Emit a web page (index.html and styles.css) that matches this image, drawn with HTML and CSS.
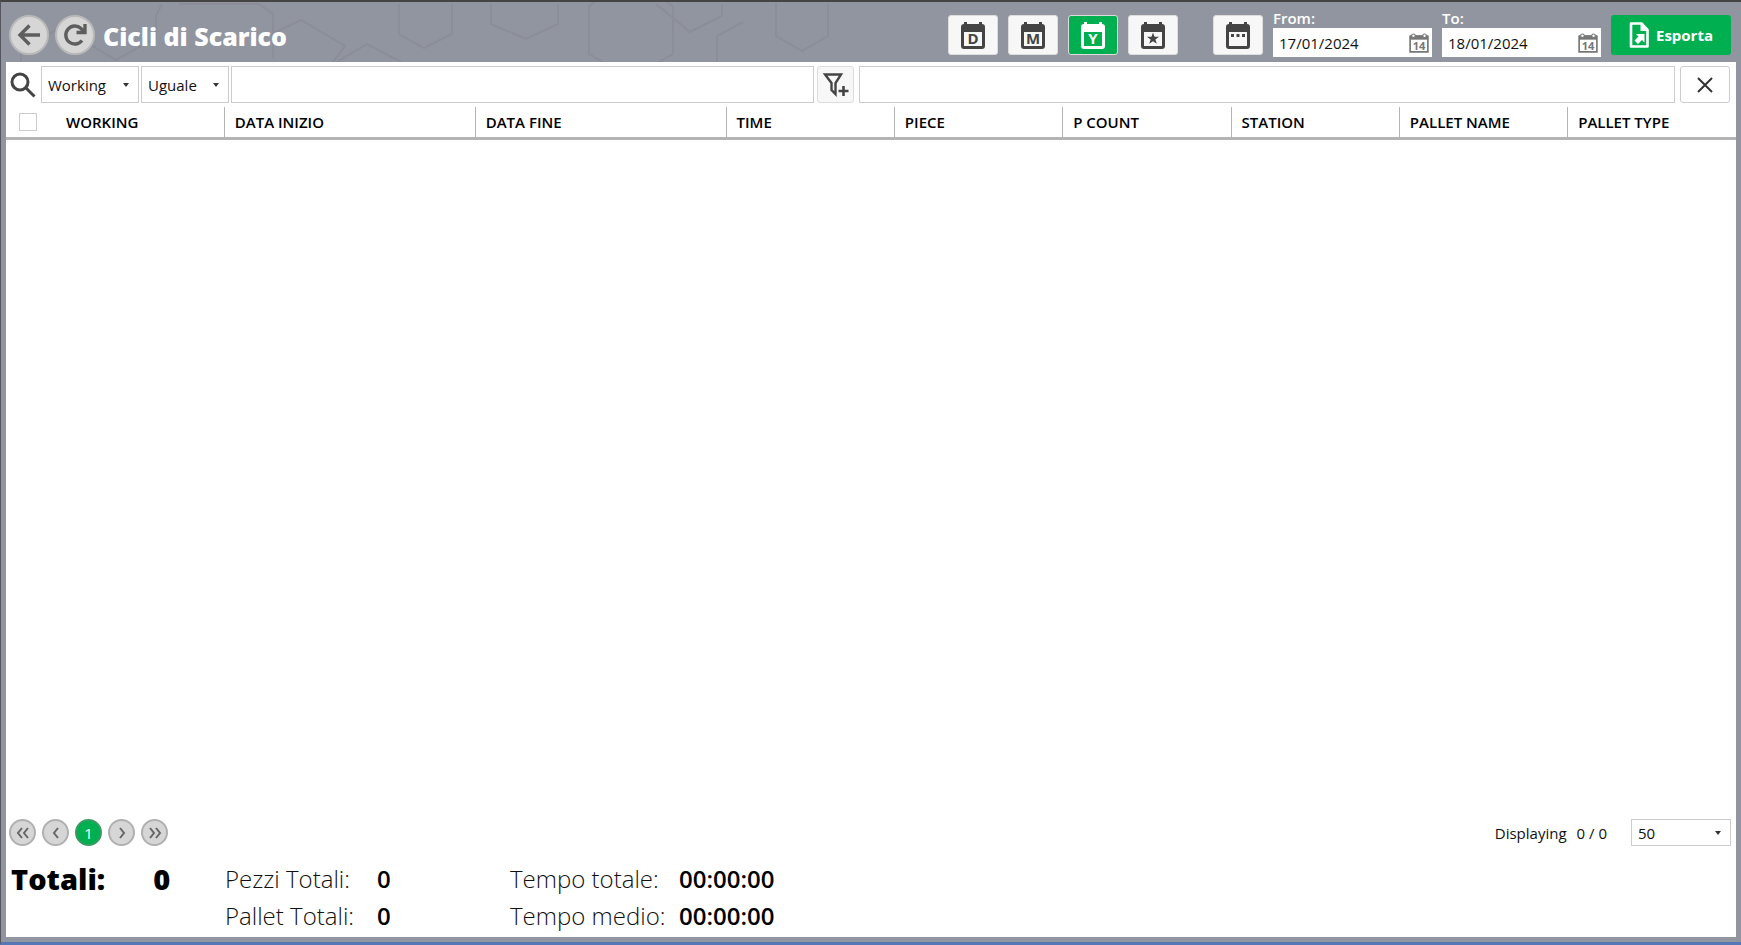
FILE: index.html
```html
<!DOCTYPE html>
<html lang="it">
<head>
  <meta charset="UTF-8">
  <title>Cicli di Scarico</title>
  <link rel="stylesheet" href="styles.css">
</head>
<body>
  <svg class="icon-defs" aria-hidden="true">
    <symbol id="calendar" viewBox="0 0 24 27">
      <path d="M3 0h3v2h12V0h3v2a3 3 0 0 1 3 3v19a3 3 0 0 1-3 3H3a3 3 0 0 1-3-3V5a3 3 0 0 1 3-3zM3 10v14h18V10z" fill="currentColor" fill-rule="evenodd"/>
    </symbol>
    <symbol id="calendar14" viewBox="0 0 18 18">
      <path d="M1 3h16v14H1z" fill="#fff" stroke="#777" stroke-width="1.5"/>
      <path d="M1 2h16v4H1z" fill="#777"/>
      <circle cx="4" cy="2.500" r="1.600" fill="#fff" stroke="#777"/>
      <circle cx="14" cy="2.500" r="1.600" fill="#fff" stroke="#777"/>
      <text x="9" y="15" text-anchor="middle" font-size="10" font-weight="700" fill="#777">14</text>
    </symbol>
  </svg>

  <header class="topbar">
    <svg class="hexagons" width="860" height="60" fill="none" stroke="#868994" stroke-width="2" aria-hidden="true">
      <path d="M20 60V48L55 28M85 40l30 18 40-22V14l6-12M178 2l80 0 14 10v44M398 2v30l25 14 28-14V2M262 36l38-18 44 26-12 16M336 60l30-18 34 18M490 2v20l35 15 32-15V2M588 4v48l14 8M588 4l6-4M672 4v48l-14 8M672 4l-6-4M655 2l34 28 32-16V2M716 60V34l26-14M775 2v32l26 15 26-15V2"/>
    </svg>

    <button class="round" type="button" aria-label="Indietro">
      <svg width="24" height="24" viewBox="0 0 24 24" fill="none" stroke="#5e5e5e" stroke-width="3.4"><path d="M23 12H4M12.500 2.500L3 12l9.500 9.500"/></svg>
    </button>
    <button class="round" type="button" aria-label="Aggiorna">
      <svg width="24" height="24" viewBox="0 0 24 24" fill="none" stroke="#5e5e5e" stroke-width="3.400"><path d="M19 17.500A9 9 0 1 1 18 5.500L21 9M22 1v8.500h-8.500"/></svg>
    </button>
    <h1>Cicli di Scarico</h1>

    <div class="periods">
      <button type="button" aria-label="Giorno">
        <svg width="24" height="27" viewBox="0 0 24 27"><use href="#calendar"/><text x="12" y="22">D</text></svg>
      </button>
      <button type="button" aria-label="Mese">
        <svg width="24" height="27" viewBox="0 0 24 27"><use href="#calendar"/><text x="12" y="22">M</text></svg>
      </button>
      <button class="active" type="button" aria-label="Anno">
        <svg width="24" height="27" viewBox="0 0 24 27"><use href="#calendar"/><text x="12" y="22">Y</text></svg>
      </button>
      <button type="button" aria-label="Preferiti">
        <svg width="24" height="27" viewBox="0 0 24 27"><use href="#calendar"/><path d="M12 10.500l1.500 4.300H18l-3.600 2.700 1.400 4.300-3.800-2.600-3.800 2.600 1.400-4.300L6 14.800h4.500z" fill="currentColor"/></svg>
      </button>
      <button class="custom" type="button" aria-label="Intervallo">
        <svg width="24" height="27" viewBox="0 0 24 27"><use href="#calendar"/><path d="M5 12h3v3H5zM10.500 12h3v3h-3zM16 12h3v3h-3z" fill="currentColor"/></svg>
      </button>
    </div>

    <div class="date">
      <label for="from">From:</label>
      <div class="date-box">
        <input id="from" type="text" value="17/01/2024">
        <button type="button" aria-label="Scegli data iniziale"><svg width="20" height="20"><use href="#calendar14"/></svg></button>
      </div>
    </div>
    <div class="date">
      <label for="to">To:</label>
      <div class="date-box">
        <input id="to" type="text" value="18/01/2024">
        <button type="button" aria-label="Scegli data finale"><svg width="20" height="20"><use href="#calendar14"/></svg></button>
      </div>
    </div>

    <button class="export" type="button">
      <svg width="20" height="26" viewBox="0 0 20 26"><path d="M2 1.500h10.500L18.500 8v16.500H2z" fill="none" stroke="#fff" stroke-width="2.600" stroke-linejoin="round"/><path d="M11.500 1v8h8z" fill="#fff"/><path d="M7 12h8.500v8.500L13 18l-4 4-3.500-3.500 4-4z" fill="#fff"/></svg>
      Esporta
    </button>
  </header>

  <main>
    <div class="filters">
      <svg class="search" width="26" height="26" viewBox="0 0 26 26" fill="none" stroke="#444" stroke-width="3"><circle cx="10" cy="10" r="8"/><path d="M15.500 15.500l9 9"/></svg>
      <span class="select field"><select aria-label="Campo"><option>Working</option></select></span>
      <span class="select operator"><select aria-label="Operatore"><option>Uguale</option></select></span>
      <input class="value" type="text" aria-label="Valore">
      <button class="add" type="button" aria-label="Aggiungi filtro">
        <svg width="26" height="24" viewBox="0 0 26 24" fill="none" stroke="#444" stroke-width="2.400"><path d="M2 1.500h16l-5.500 8.500v11l-4-4v-7z"/><path d="M20.500 13v10M15.500 18h10" stroke-width="2.600"/></svg>
      </button>
      <input class="active-filters" type="text" aria-label="Filtri attivi" readonly>
      <button class="clear" type="button" aria-label="Rimuovi filtri">
        <svg width="16" height="16" viewBox="0 0 16 16" fill="none" stroke="#333" stroke-width="2"><path d="M1 1l14 14M15 1L1 15"/></svg>
      </button>
    </div>

    <div class="grid">
      <table>
        <colgroup>
          <col class="c-check"><col>
          <col class="c-date"><col class="c-date">
          <col class="c-std"><col class="c-std"><col class="c-std"><col class="c-std"><col class="c-std"><col class="c-std">
        </colgroup>
        <thead>
          <tr>
            <th class="check"><input type="checkbox" aria-label="Seleziona tutto"></th>
            <th>WORKING</th>
            <th>DATA INIZIO</th>
            <th>DATA FINE</th>
            <th>TIME</th>
            <th>PIECE</th>
            <th>P COUNT</th>
            <th>STATION</th>
            <th>PALLET NAME</th>
            <th>PALLET TYPE</th>
          </tr>
        </thead>
        <tbody></tbody>
      </table>
    </div>

    <div class="pager">
      <button type="button" aria-label="Prima pagina"><svg width="14" height="14" viewBox="0 0 14 14"><path d="M6 2L2 7l4 5M12 2L8 7l4 5"/></svg></button>
      <button type="button" aria-label="Pagina precedente"><svg width="14" height="14" viewBox="0 0 14 14"><path d="M9 2L5 7l4 5"/></svg></button>
      <button class="current" type="button">1</button>
      <button type="button" aria-label="Pagina successiva"><svg width="14" height="14" viewBox="0 0 14 14"><path d="M5 2l4 5-4 5"/></svg></button>
      <button type="button" aria-label="Ultima pagina"><svg width="14" height="14" viewBox="0 0 14 14"><path d="M2 2l4 5-4 5M8 2l4 5-4 5"/></svg></button>
      <span class="displaying">Displaying</span>
      <span class="range">0 / 0</span>
      <span class="select size"><select aria-label="Righe per pagina"><option>50</option></select></span>
    </div>

    <div class="totals">
      <div class="total"><span>Totali:</span><span>0</span></div>
      <dl class="pieces">
        <dt>Pezzi Totali:</dt><dd>0</dd>
        <dt>Pallet Totali:</dt><dd>0</dd>
      </dl>
      <dl class="times">
        <dt>Tempo totale:</dt><dd>00:00:00</dd>
        <dt>Tempo medio:</dt><dd>00:00:00</dd>
      </dl>
    </div>
  </main>
</body>
</html>
```
FILE: styles.css
```css
* {
  box-sizing: border-box;
}
body {
  margin: 0;
  height: 100vh;
  display: flex;
  flex-direction: column;
  font-family: "Open Sans", "Noto Sans", sans-serif;
  font-size: 15px;
  color: #111;
  background: #9195a0;
  border-top: 2px solid #444;
  border-left: 1px solid #55555f;
  border-bottom: 3px solid #5577b5;
}
button, input, select {
  font: inherit;
  color: inherit;
}
button {
  display: flex;
  align-items: center;
  justify-content: center;
  padding: 0;
}
.icon-defs {
  display: none;
}

/* top bar */
.topbar {
  position: relative;
  display: flex;
  align-items: center;
  height: 60px;
  padding: 6px 10px 0 8px;
  flex-shrink: 0;
}
.topbar > * {
  position: relative;
}
.topbar .hexagons {
  position: absolute;
  left: 0;
  top: 0;
  opacity: 0.5;
}
.round {
  width: 40px;
  height: 40px;
  margin-right: 6px;
  border: 2px solid #b9b9b9;
  border-radius: 50%;
  background: #d6d6d6;
}
h1 {
  margin: 0 auto 0 2px;
  padding-top: 2px;
  font-size: 25px;
  font-weight: 800;
  line-height: 32px;
  color: #fff;
}
.periods {
  display: flex;
  gap: 10px;
  margin-right: 10px;
}
.periods button {
  width: 50px;
  height: 40px;
  border: 1px solid #ddd;
  border-radius: 3px;
  background: #f7f7f7;
  color: #444;
}
.periods .active {
  background: #00b050;
  color: #fff;
}
.periods .custom {
  margin-left: 25px;
}
.periods text {
  font-size: 15px;
  font-weight: 700;
  text-anchor: middle;
  fill: currentColor;
}
.date {
  align-self: flex-end;
  width: 159px;
  margin: 0 10px 5px 0;
}
.date label {
  display: block;
  font-size: 15px;
  font-weight: 600;
  line-height: 19px;
  color: #fff;
}
.date-box {
  display: flex;
  align-items: center;
  height: 29px;
  padding-right: 3px;
  background: #fff;
}
.date-box input {
  flex: 1;
  min-width: 0;
  padding: 0 6px;
  border: 0;
  background: none;
}
.date-box button {
  border: 0;
  background: none;
}
.export {
  gap: 7px;
  width: 120px;
  height: 40px;
  border: 0;
  border-radius: 3px;
  background: #00b050;
  color: #fff;
  font-weight: 700;
}

/* main panel */
main {
  flex: 1;
  display: flex;
  flex-direction: column;
  margin: 0 5px 5px;
  background: #fff;
}
.filters {
  display: flex;
  height: 45px;
  padding: 4px 6px 4px 4px;
}
.search {
  align-self: center;
  margin-right: 5px;
}
.filters input {
  min-width: 0;
  border: 1px solid #ccc;
}
.filters button {
  border: 1px solid #ccc;
  border-radius: 3px;
}
.filters .value {
  flex: 582;
  margin-right: 3px;
}
.filters .add {
  width: 37px;
  margin-right: 5px;
  background: #f7f7f7;
  border-color: #ddd;
}
.filters .active-filters {
  flex: 817;
  margin-right: 5px;
}
.filters .clear {
  width: 50px;
  background: #fff;
}
.select {
  position: relative;
  display: flex;
}
.select select {
  width: 100%;
  padding: 0 6px;
  border: 1px solid #ccc;
  border-radius: 0;
  background: #fff;
  appearance: none;
}
.select::after {
  content: "";
  position: absolute;
  right: 10px;
  top: 50%;
  margin-top: -2px;
  border: 3px solid transparent;
  border-top: 4px solid #333;
  border-bottom: 0;
  pointer-events: none;
}
.field {
  width: 98px;
  margin-right: 2px;
}
.operator {
  width: 88px;
  margin-right: 2px;
}

/* table */
.grid {
  flex: 1;
}
table {
  width: 100%;
  table-layout: fixed;
  border-collapse: collapse;
}
.c-check {
  width: 50px;
}
.c-date {
  width: 14.5%;
}
.c-std {
  width: 9.73%;
}
th {
  height: 31px;
  padding: 0 10px;
  border-left: 1px solid #b4b4b4;
  border-bottom: 3px solid #b4b4b4;
  font-weight: 600;
  line-height: 20px;
  text-align: left;
  color: #000;
}
th.check, th.check + th {
  border-left: 0;
}
th.check {
  padding: 0 0 0 13px;
}
th.check input {
  display: block;
  width: 18px;
  height: 18px;
  margin: 0;
  border: 1px solid #ccc;
  background: #fff;
  appearance: none;
}

/* pager */
.pager {
  display: flex;
  align-items: center;
  gap: 6px;
  height: 27px;
  padding: 0 5px 0 3px;
}
.pager button {
  width: 27px;
  height: 27px;
  border: 2px solid #b0b0b0;
  border-radius: 50%;
  background: #d6d6d6;
}
.pager svg {
  fill: none;
  stroke: #666;
  stroke-width: 2;
}
.pager .current {
  border-color: #3c9a64;
  background: #00b050;
  color: #fff;
  font-size: 15px;
}
.displaying {
  margin-left: auto;
}
.range {
  margin: 0 18px 0 4px;
}
.size {
  width: 100px;
  height: 27px;
}

/* totals */
.totals {
  display: flex;
  padding: 14px 5px 3px;
  font-size: 24px;
  line-height: 37px;
}
.total {
  display: flex;
  gap: 48px;
  width: 214px;
  font-size: 29px;
  font-weight: 800;
  color: #000;
}
dl {
  display: grid;
  margin: 0;
}
dt {
  font-weight: 300;
}
dd {
  margin: 0;
  font-weight: 600;
  color: #000;
}
.pieces {
  grid-template-columns: 152px 133px;
}
.times {
  grid-template-columns: 169px auto;
}
```
